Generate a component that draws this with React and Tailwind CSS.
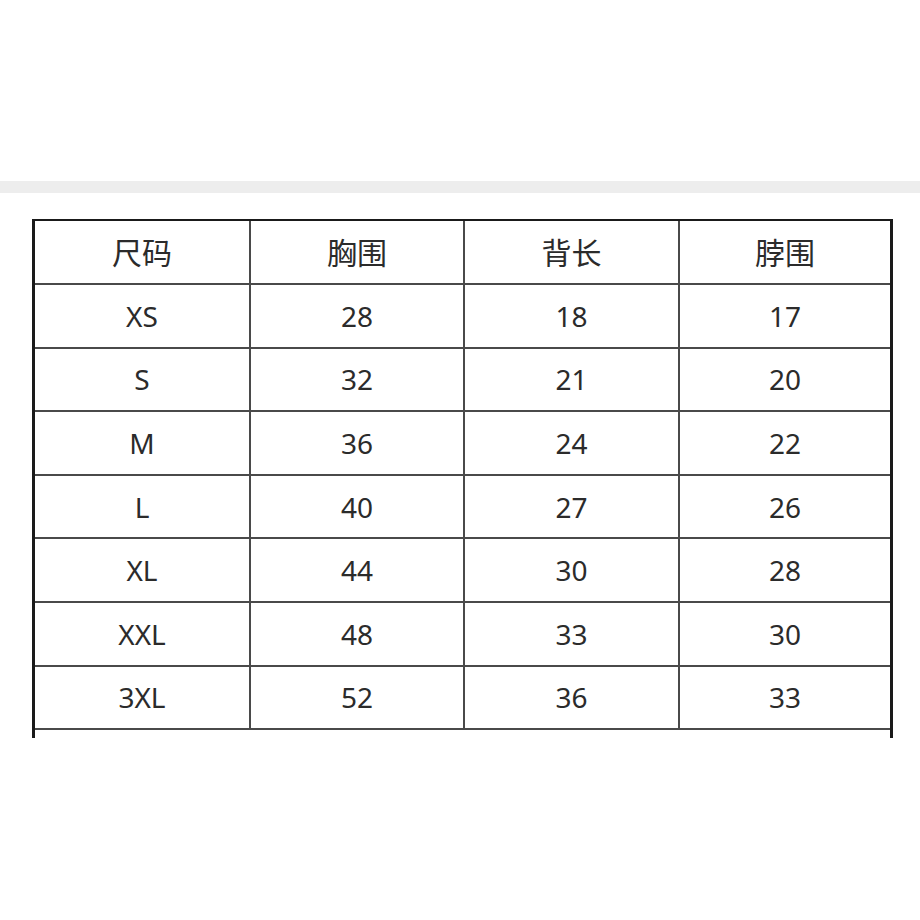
import React from "react";

const header = ["尺码", "胸围", "背长", "脖围"];
const rows = [
  ["XS", "28", "18", "17"],
  ["S", "32", "21", "20"],
  ["M", "36", "24", "22"],
  ["L", "40", "27", "26"],
  ["XL", "44", "30", "28"],
  ["XXL", "48", "33", "30"],
  ["3XL", "52", "36", "33"],
];

function Cell({ children, last, head }) {
  return (
    <div
      className={
        "flex items-center justify-center border-b-2 border-[#4a4a4a] text-[#2b2b2b] " +
        (head ? "text-[30px] " : "text-[28px] ") +
        (last ? "" : "border-r-2")
      }
    >
      {children}
    </div>
  );
}

export default function App() {
  return (
    <div
      className="w-[920px] h-[920px] bg-white flex flex-col"
      style={{ fontFamily: '"Noto Sans", "Noto Sans CJK SC", sans-serif' }}
    >
      <div className="h-[181px]" />
      <div className="h-[12px] bg-[#ededed]" />
      <div className="h-[26px]" />
      <div className="ml-[32px] w-[861px] border-l-[3px] border-r-[3px] border-t-2 border-[#1a1a1a]">
        <div className="grid grid-cols-[216px_214px_215px_1fr] auto-rows-[63.6px] grid-rows-[64px]">
          {header.map((h, i) => (
            <Cell key={h} last={i === 3} head>
              {h}
            </Cell>
          ))}
          {rows.map((r) =>
            r.map((c, i) => (
              <Cell key={r[0] + i} last={i === 3}>
                {c}
              </Cell>
            ))
          )}
        </div>
        <div className="h-[8px]" />
      </div>
    </div>
  );
}
